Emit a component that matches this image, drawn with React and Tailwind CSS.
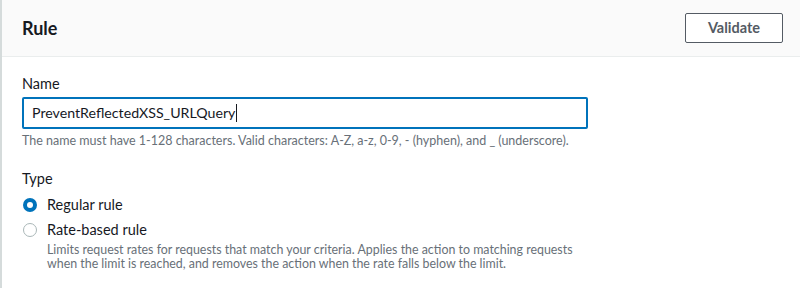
import React from "react";

export default function App() {
  return (
    <div className="w-[800px] h-[288px] bg-white font-['Lato','Liberation_Sans',sans-serif] text-[#16191f] border-l-2 border-[#d5dbdb] overflow-hidden">
      {/* Header */}
      <div className="h-[57px] bg-[#fafafa] border-b border-[#eaeded] flex items-center justify-between pl-5 pr-[17px]">
        <h2 className="text-[18px] font-bold leading-none">Rule</h2>
        <button className="h-[30px] w-[98px] border border-[#545b64] rounded-[2px] bg-white text-[14.5px] font-bold text-[#545b64]">
          Validate
        </button>
      </div>

      {/* Body */}
      <div className="pl-5 pt-[16px]">
        <div className="text-[14.5px] leading-[22px]">Name</div>
        <div className="mt-[2px] w-[566px] h-[32px] border-2 border-[#0073bb] rounded-[2px] flex items-center pl-[8px]">
          <span className="text-[14.2px]">PreventReflectedXSS_URLQuery</span>
          <span className="w-px h-[18px] bg-[#16191f] ml-[1px]" />
        </div>
        <p className="mt-[4px] text-[12.5px] leading-[16px] text-[#687078]">
          The name must have 1-128 characters. Valid characters: A-Z, a-z, 0-9, - (hyphen), and _ (underscore).
        </p>

        <div className="mt-[19px] text-[14.5px] leading-[22px]">Type</div>
        <div className="mt-[4px] flex items-center gap-[10px] h-[22px]">
          <span className="w-[14px] h-[14px] rounded-full bg-[#0073bb] flex items-center justify-center ml-[1px]">
            <span className="w-[6px] h-[6px] rounded-full bg-white" />
          </span>
          <span className="text-[14.5px]">Regular rule</span>
        </div>
        <div className="mt-[3px] flex items-center gap-[10px] h-[22px]">
          <span className="w-[14px] h-[14px] rounded-full border border-[#aab7b8] bg-white ml-[1px]" />
          <span className="text-[14.5px]">Rate-based rule</span>
        </div>
        <p className="mt-[2px] pl-[25px] text-[12.4px] leading-[14px] text-[#687078]">
          Limits request rates for requests that match your criteria. Applies the action to matching requests
          <br />
          when the limit is reached, and removes the action when the rate falls below the limit.
        </p>
      </div>
    </div>
  );
}
